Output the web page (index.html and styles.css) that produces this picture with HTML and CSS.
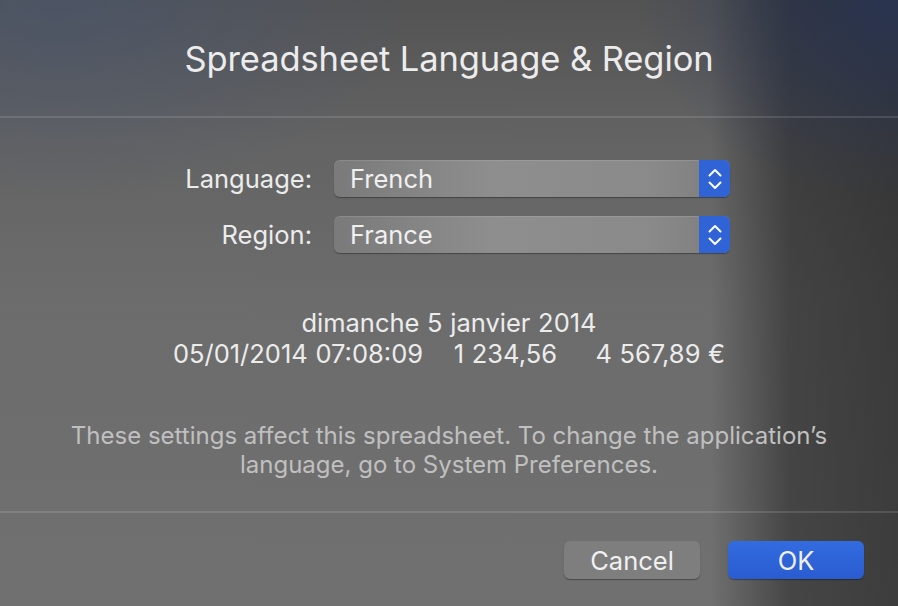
FILE: index.html
```html
<!DOCTYPE html>
<html>
<head>
<meta charset="utf-8">
<link rel="stylesheet" href="styles.css">
</head>
<body>
<div class="dialog">
  <header class="title-bar">
    <h1 class="title">Spreadsheet Language &amp; Region</h1>
  </header>
  <div class="divider"></div>
  <main class="content">
    <div class="form">
      <div class="row">
        <span class="label">Language:</span>
        <div class="popup">
          <span class="popup-value">French</span>
          <span class="popup-arrows">
            <svg width="16" height="26" viewBox="0 0 16 26"><path d="M2.5 9.5 L8 4 L13.5 9.5 M2.5 16.5 L8 22 L13.5 16.5" fill="none" stroke="#fff" stroke-width="2" stroke-linecap="round" stroke-linejoin="round"/></svg>
          </span>
        </div>
      </div>
      <div class="row">
        <span class="label">Region:</span>
        <div class="popup">
          <span class="popup-value">France</span>
          <span class="popup-arrows">
            <svg width="16" height="26" viewBox="0 0 16 26"><path d="M2.5 9.5 L8 4 L13.5 9.5 M2.5 16.5 L8 22 L13.5 16.5" fill="none" stroke="#fff" stroke-width="2" stroke-linecap="round" stroke-linejoin="round"/></svg>
          </span>
        </div>
      </div>
    </div>
    <div class="preview">
      <div>dimanche 5 janvier 2014</div>
      <div>05/01/2014 07:08:09&nbsp;&nbsp;&nbsp; 1 234,56&nbsp;&nbsp;&nbsp;&nbsp; 4 567,89 €</div>
    </div>
    <p class="note">These settings affect this spreadsheet. To change the application’s<br>language, go to System Preferences.</p>
  </main>
  <div class="divider"></div>
  <footer class="buttons">
    <button class="btn btn-cancel">Cancel</button>
    <button class="btn btn-ok">OK</button>
  </footer>
</div>
</body>
</html>
```
FILE: styles.css
```css
html, body {
  margin: 0;
  padding: 0;
  width: 898px;
  height: 606px;
  overflow: hidden;
}
body {
  font-family: Inter, "Liberation Sans", sans-serif;
  color: #ececec;
  background:
    radial-gradient(ellipse 360px 200px at 60px 0px, rgba(70,85,115,0.55), rgba(70,85,115,0) 100%),
    radial-gradient(ellipse 260px 200px at 898px 0px, rgba(40,55,95,0.7), rgba(40,55,95,0) 100%),
    linear-gradient(to right, rgba(0,0,0,0) 0px, rgba(0,0,0,0) 710px, rgba(0,0,0,0.38) 790px, rgba(0,0,0,0.46) 898px),
    linear-gradient(to bottom, #535353 0px, #636363 140px, #6c6c6c 300px, #707070 606px);
}
.dialog {
  display: flex;
  flex-direction: column;
  height: 606px;
}
.title-bar {
  height: 116px;
  display: flex;
  align-items: center;
  justify-content: center;
}
.title {
  margin: 0;
  font-weight: 400;
  font-size: 34.5px;
  color: #ececec;
  letter-spacing: -0.1px;
}
.divider {
  height: 2px;
  background: rgba(255,255,255,0.12);
}
.content {
  flex: 1;
  display: flex;
  flex-direction: column;
  align-items: center;
}
.form {
  align-self: flex-start;
  margin-top: 42px;
  display: flex;
  flex-direction: column;
  gap: 19px;
}
.row {
  display: flex;
  align-items: center;
}
.label {
  width: 334px;
  text-align: right;
  font-size: 25.5px;
  padding-right: 22px;
  box-sizing: border-box;
  color: #ececec;
}
.popup {
  width: 396px;
  height: 37px;
  border-radius: 6px;
  display: flex;
  overflow: hidden;
  background: linear-gradient(to right, #7a7a7a, #8e8e8e 40%, #8a8a8a 80%, #7c7c7c);
  box-shadow: 0 1px 1px rgba(0,0,0,0.35), inset 0 1px 0 rgba(255,255,255,0.12);
}
.popup-value {
  flex: 1;
  padding-left: 16px;
  font-size: 25.5px;
  line-height: 37px;
  color: #f0f0f0;
}
.popup-arrows {
  width: 31px;
  background: #2f63d6;
  display: flex;
  align-items: center;
  justify-content: center;
}
.preview {
  margin-top: 54px;
  text-align: center;
  font-size: 25.5px;
  line-height: 31px;
  color: #ececec;
  white-space: nowrap;
  word-spacing: 0.5px;
}
.note {
  margin: 52px 0 0;
  text-align: center;
  font-size: 24px;
  line-height: 29px;
  color: #c0c0c0;
  white-space: nowrap;
}
.buttons {
  height: 93px;
  display: flex;
  justify-content: flex-end;
  align-items: flex-start;
  gap: 28px;
  padding: 28px 34px 0 0;
  box-sizing: border-box;
}
.btn {
  width: 136px;
  height: 38px;
  border: none;
  border-radius: 6px;
  font-family: Inter, "Liberation Sans", sans-serif;
  font-size: 25.5px;
  color: #f0f0f0;
  box-shadow: 0 1px 1px rgba(0,0,0,0.35);
}
.btn-cancel {
  background: #7e7e7e;
}
.btn-ok {
  background: linear-gradient(to bottom, #336be0, #2a5cd0);
}
```
